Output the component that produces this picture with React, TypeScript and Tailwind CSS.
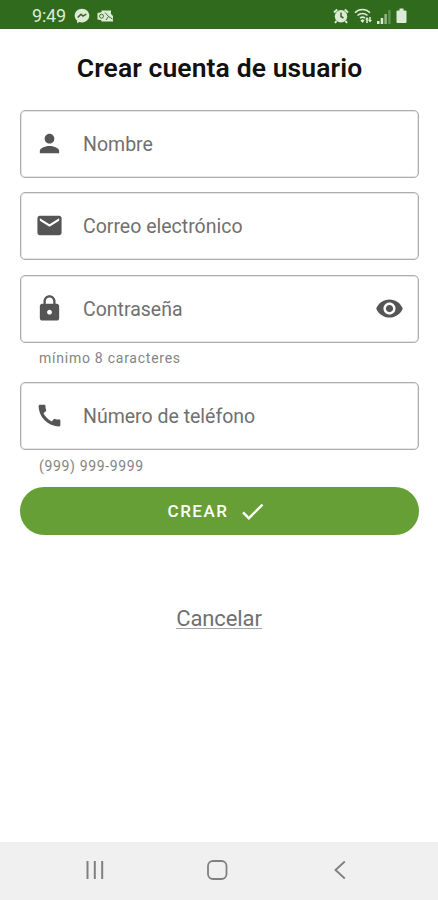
import type { ReactNode } from "react";
import type { IconType } from "react-icons";
import { MdCall, MdCheck, MdEmail, MdLock, MdPerson, MdVisibility } from "react-icons/md";

type FieldProps = {
  icon: IconType;
  label: string;
  trailing?: ReactNode;
};

function Field({ icon: Icon, label, trailing }: FieldProps) {
  return (
    <div className="flex h-[68px] items-center rounded-[5px] border border-[#adadad] px-3.5 pb-px shadow-[inset_0_0_0_1px_#e6e6e6]">
      <Icon className="size-[29px] shrink-0 text-[#555]" />
      <span className="ml-[19px] flex-1 pt-[2px] text-[19.5px] leading-6 text-[#707070]">{label}</span>
      {trailing}
    </div>
  );
}

function StatusBar() {
  return (
    <header className="flex h-[29px] items-center bg-[#306a1c] pt-[3px] pr-[31px] pl-8 text-[#dcebd5]">
      <span className="w-[36px] text-[18px] leading-5 tracking-[-0.2px]">9:49</span>
      <svg viewBox="0 0 16 16" className="ml-[6px] size-4">
        <path
          fill="currentColor"
          d="M8 .8C3.800.8.7 3.800.7 7.600c0 2.100.9 3.900 2.400 5.100v2.500l2.300-1.200c.8.2 1.700.4 2.600.4 4.200 0 7.300-3 7.300-6.800S12.200.8 8 .8z"
        />
        <path d="M3.700 9.600 7 6.200l2 1.900 3.300-1.900" fill="none" stroke="#306a1c" strokeWidth="1.500" />
      </svg>
      <svg viewBox="0 0 17 14" className="ml-[7px] h-3.5 w-[17px]">
        <path fill="currentColor" d="M4.500 1.500H14V5l2 2v5.500H4.500z" />
        <path fill="currentColor" d="M.5 4 8 2.500V12L.5 10.500z" />
        <circle cx="4.500" cy="7.200" r="2" fill="none" stroke="#306a1c" strokeWidth=".9" />
        <path d="M8 3.500 11.500 7.500M9 11l2.500-3.500 4 2.500" fill="none" stroke="#306a1c" strokeWidth=".9" />
      </svg>
      <svg viewBox="0 0 16 16" className="ml-auto size-4">
        <path d="M1 4.500 4.200 1.500M15 4.500 11.800 1.500M3.500 13l-1.500 2M12.500 13l1.500 2" stroke="currentColor" strokeWidth="2" />
        <circle cx="8" cy="8.300" r="6.200" fill="currentColor" />
        <path d="M8 4.500v4l2.500 1.500" fill="none" stroke="#306a1c" strokeWidth="1.500" />
      </svg>
      <svg viewBox="0 0 19 16" className="ml-[5px] h-4 w-[19px]">
        <path
          d="M1 4.700c4.200-4.300 10.800-4.300 15 0M3.500 7.500c2.900-2.700 7.100-2.700 10 0M6 10.200c1.500-1.300 3.500-1.300 5 0"
          fill="none"
          stroke="currentColor"
          strokeWidth="1.600"
        />
        <path d="m8.500 11 2 1.500-2 2.500-2-2.500z" fill="currentColor" />
        <path d="m13 9 2 2.500h-1.200V15h-1.600v-3.500H11zM15.200 9h1.600v3H18l-2 2.500-2-2.500h1.200z" fill="currentColor" />
      </svg>
      <svg viewBox="0 0 14 15" className="ml-[4px] h-[15px] w-3.5">
        <path d="M0 12h2.500v3H0zM3.700 9h2.500v6H3.700z" fill="currentColor" />
        <path d="M7.400 5h2.400v10H7.400z" fill="currentColor" opacity=".6" />
        <path d="M11.200 1h2.400v14h-2.400z" fill="currentColor" opacity=".3" />
      </svg>
      <svg viewBox="0 0 11 16" className="ml-[5px] h-4 w-[11px]">
        <path d="M3.500.5h4v2H9.500q1 0 1 1V14q0 1-1 1h-8q-1 0-1-1V3.500q0-1 1-1h2z" fill="currentColor" />
      </svg>
    </header>
  );
}

function NavigationBar() {
  return (
    <nav className="flex h-[58px] items-center bg-[#f0f0f0] pb-[2px] text-[#808080]">
      <svg viewBox="0 0 20 20" className="ml-[85px] size-5">
        <path d="M2.500 1v18M9.800 1v18M17.200 1v18" stroke="currentColor" strokeWidth="2" />
      </svg>
      <svg viewBox="0 0 22 22" className="ml-[101px] size-[22px]">
        <rect x="2" y="2" width="18.500" height="18" rx="5" fill="none" stroke="currentColor" strokeWidth="1.800" />
      </svg>
      <svg viewBox="0 0 12 20" className="ml-[106px] h-5 w-3">
        <path d="M10.800 1.500 1.500 10l9.300 8.500" fill="none" stroke="currentColor" strokeWidth="1.900" />
      </svg>
    </nav>
  );
}

export default function App() {
  return (
    <div className="flex h-[900px] w-full flex-col bg-white font-['Roboto',sans-serif]">
      <StatusBar />

      <main className="flex flex-1 flex-col pr-[19px] pl-5">
        <h1 className="mt-[23px] text-center text-[26.5px] leading-8 font-semibold tracking-[0.1px] text-[#111]">
          Crear cuenta de usuario
        </h1>

        <form className="mt-[26px] flex flex-col">
          <Field icon={MdPerson} label="Nombre" />
          <div className="mt-[14px]">
            <Field icon={MdEmail} label="Correo electrónico" />
          </div>
          <div className="mt-[15px]">
            <Field
              icon={MdLock}
              label="Contraseña"
              trailing={<MdVisibility className="size-[29px] text-[#555]" />}
            />
            <p className="mt-[5px] ml-[19px] text-[14px] leading-5 tracking-[0.75px] text-[#848484]">
              mínimo 8 caracteres
            </p>
          </div>
          <div className="mt-[14px]">
            <Field icon={MdCall} label="Número de teléfono" />
            <p className="mt-[6px] ml-[19px] text-[14px] leading-5 tracking-[0.65px] text-[#848484]">
              (999) 999-9999
            </p>
          </div>

          <button
            type="button"
            className="mt-[11px] flex h-12 items-center justify-center gap-[10px] rounded-full bg-[#659f35] pr-1 text-[17px] font-medium tracking-[1.5px] text-white"
          >
            <span className="pt-[2px]">CREAR</span>
            <MdCheck className="size-[29px]" />
          </button>
        </form>

        <a
          href="#"
          className="mt-[74px] mr-px self-center border-b border-[#a5a5a5] text-[22px] leading-[19px] tracking-[-0.1px] text-[#707070]"
        >
          Cancelar
        </a>
      </main>

      <NavigationBar />
    </div>
  );
}
